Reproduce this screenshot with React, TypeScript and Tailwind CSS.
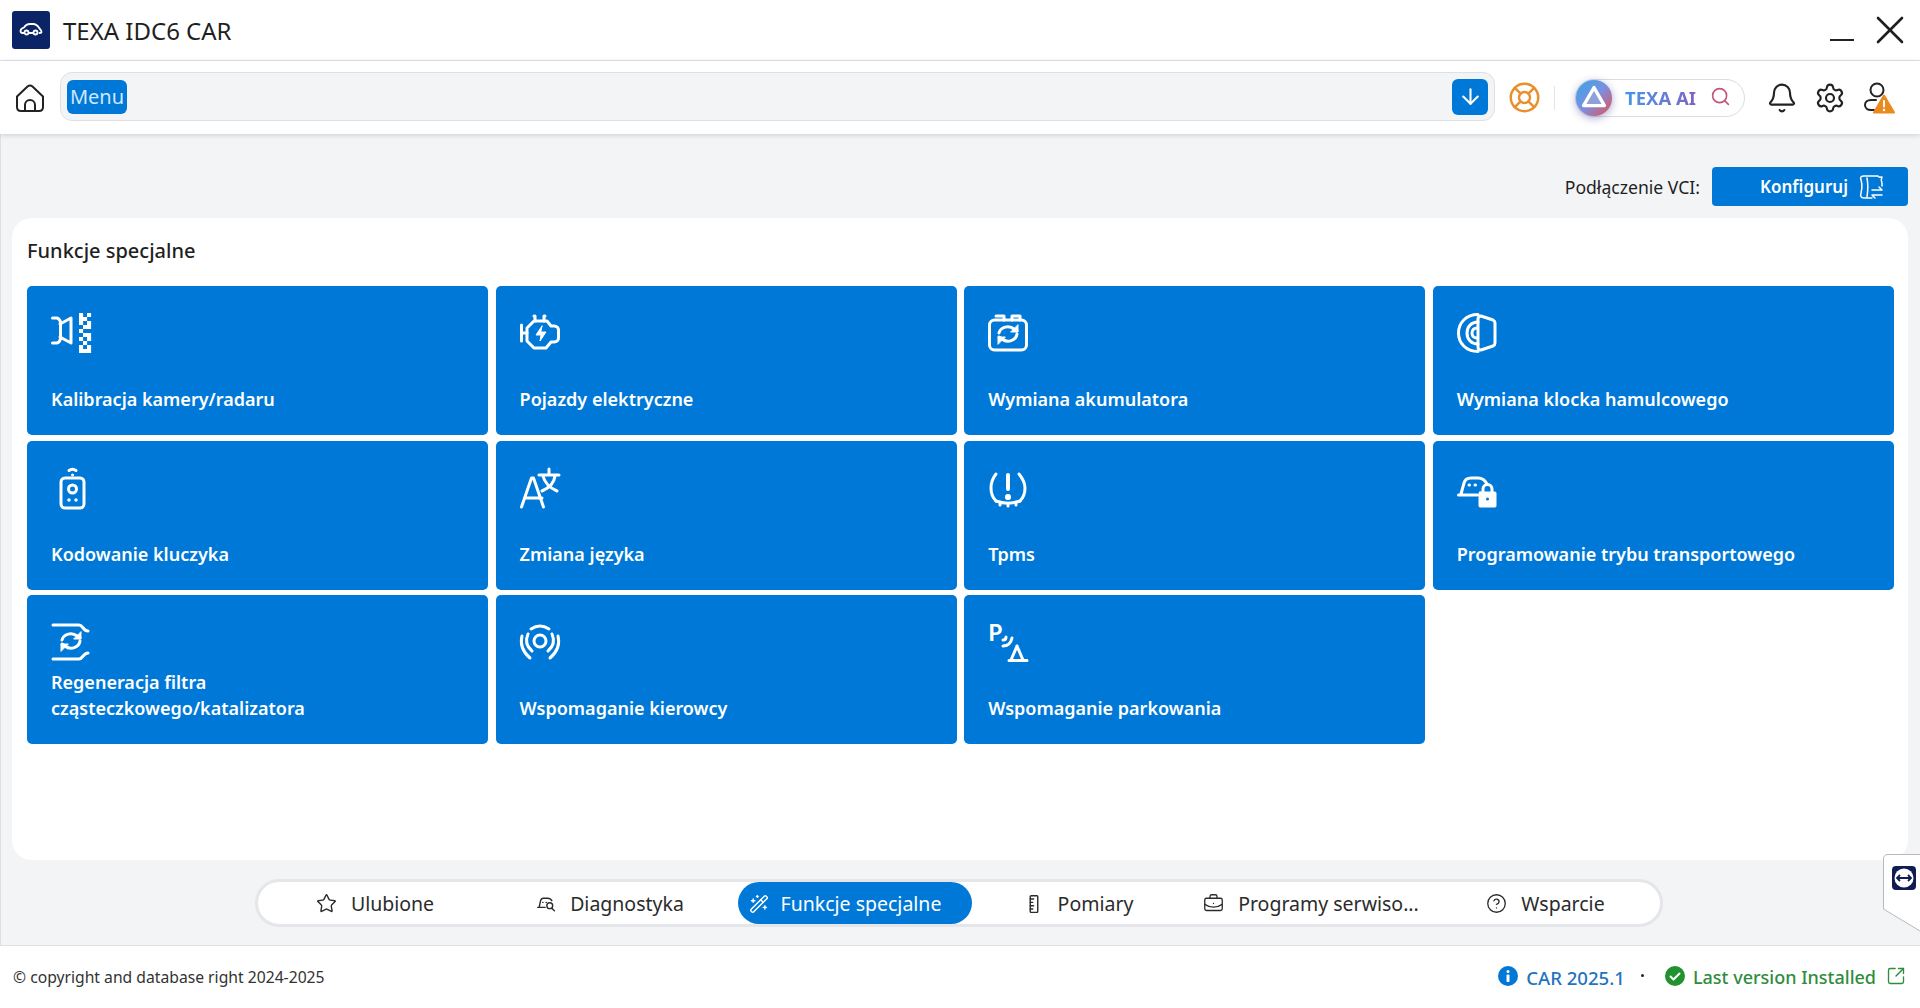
import React from "react";
import {
  ArrowDown,
  Bell,
  BriefcaseBusiness,
  CircleHelp,
  LifeBuoy,
  Search,
  Settings,
  SquareArrowOutUpRight,
  Star,
  WandSparkles,
  X,
} from "lucide-react";

const IconBox: React.FC<{ children: React.ReactNode }> = ({ children }) => (
  <svg
    viewBox="0 0 40 40"
    className="w-10 h-10 text-white overflow-visible"
    fill="none"
    stroke="currentColor"
    strokeWidth={3}
    strokeLinecap="round"
    strokeLinejoin="round"
  >
    {children}
  </svg>
);

const RefreshArrows = () => (
  <>
    <path d="M11 18a9 8 0 0 1 15-4l3 2" />
    <path d="M29 19a9 8 0 0 1-15 5l-3-2" />
    <path d="M30 10v7h-7z" fill="currentColor" strokeWidth={1} />
    <path d="M10 29v-7h7z" fill="currentColor" strokeWidth={1} />
  </>
);

const checkers = [
  [1, 0], [3, 0], [1, 1], [2, 1], [1, 2], [3, 2], [2, 3], [3, 3], [1, 4], [2, 5], [3, 5],
  [1, 6], [3, 6], [2, 7], [1, 8], [3, 8], [1, 9], [2, 9], [3, 9],
];

const CameraIcon = () => (
  <IconBox>
    <path d="M1.500 5h4c2 0 3 1 4 4v17c-1 3-2 4-4 4h-4" />
    <path d="M9 11l11-6v25l-11-6" />
    <g fill="currentColor" stroke="none">
      {checkers.map(([cx, cy]) => (
        <rect key={`${cx}-${cy}`} x={24 + cx * 4} y={cy * 4} width={4.100} height={4} />
      ))}
    </g>
  </IconBox>
);

const EngineIcon = () => (
  <IconBox>
    <path d="M1.500 12v16M1.500 20H7" />
    <path d="M14 3h1v5M25 3h-1v5" />
    <path d="M14 8h13l4 5h3c3 0 4.500 2 4.500 4v8c0 2-1.500 4-4.500 4h-3l-5 6H14l-7-7V15z" />
    <path d="M22 13l-6 9h5l-1 6 6-9h-5z" fill="currentColor" strokeWidth={1} />
  </IconBox>
);

const BatteryIcon = () => (
  <IconBox>
    <rect x="1.500" y="7" width="37" height="30" rx="5" />
    <path d="M8 3h8v4M24 7V3h8v4" />
    <g transform="translate(0 2)">
      <RefreshArrows />
    </g>
  </IconBox>
);

const BrakeIcon = () => (
  <IconBox>
    <path d="M21 1.500C9 1.500 1.500 10 1.500 20S9 38.500 21 38.500" />
    <path d="M21 9c-7 0-11 5-11 11s4 11 11 11" />
    <path d="M20 15c-3 0-5 2-5 5s2 5 5 5" />
    <path d="M24 3l12 4c1 .5 2 1 2 3v20c0 2-1 2.500-2 3l-12 4c-2 0-3-1-3-3V6c0-2 1-3 3-3z" />
  </IconBox>
);

const KeyIcon = () => (
  <IconBox>
    <rect x="10" y="10" width="23" height="30" rx="4" />
    <circle cx="21.500" cy="21" r="4" />
    <path d="M18 2.500c2-1.500 5-1.500 7 0" />
    <circle cx="21.500" cy="7" r="1" fill="currentColor" strokeWidth={1} />
    <circle cx="18" cy="32" r="1" fill="currentColor" strokeWidth={1.500} />
    <circle cx="25" cy="32" r="1" fill="currentColor" strokeWidth={1.500} />
  </IconBox>
);

const LanguageIcon = () => (
  <IconBox>
    <path d="M1.500 39l10-29h2l10 29M5 30h17" />
    <path d="M19 7h20M29 1v6M23 8c2 8 7 12 14 15M35 8c-1 8-6 12-13 15" />
  </IconBox>
);

const TpmsIcon = () => (
  <IconBox>
    <path d="M8 6C4 11 3 15 3 20s2 10 5 13" />
    <path d="M31 6c4 5 6 9 6 14s-2 10-5 13" />
    <path d="M8 33c8 3 16 3 24 0M12 34v3M20 35v3M28 34v3" />
    <path d="M20 7v14" strokeWidth={4} />
    <circle cx="20" cy="29" r="1.600" fill="currentColor" />
  </IconBox>
);

const TransportIcon = () => (
  <IconBox>
    <path d="M1.500 27h19M4 26l3-11c1-4 3-5 7-5h7c4 0 7 2 9 6" />
    <path d="M12 17h.5M18 17h.5" strokeWidth={3} />
    <rect x="22" y="24" width="17" height="15" rx="1" fill="currentColor" strokeWidth={1} />
    <path d="M26 24v-3a4.500 4.500 0 0 1 9 0v3" />
    <circle cx="30.500" cy="31" r="1.500" fill="#0078d7" stroke="none" />
  </IconBox>
);

const FilterIcon = () => (
  <IconBox>
    <path d="M2 3h26c4 0 4 6 9 6" />
    <path d="M2 37h26c4 0 4-6 9-6" />
    <RefreshArrows />
  </IconBox>
);

const AssistIcon = () => (
  <IconBox>
    <circle cx="20" cy="19" r="6" />
    <path d="M11 7c6-4 12-4 18 0" />
    <path d="M8 12c-3 7-2 12 4 17" />
    <path d="M32 12c3 7 2 12-4 17" />
    <path d="M2 14c-2 8 1 16 8 22" />
    <path d="M38 14c2 8-1 16-8 22" />
  </IconBox>
);

const ParkingIcon = () => (
  <IconBox>
    <text x="0" y="19" fontSize="24" fontWeight="600" fill="currentColor" stroke="none" fontFamily="Noto Sans, sans-serif">
      P
    </text>
    <path d="M15 18c2 0 3-1 3-3M15 24c5 0 8-3 9-8" />
    <path d="M29 24l-6 14M29 24l6 14M21 38.500h18" />
  </IconBox>
);

const cards = [
  { label: "Kalibracja kamery/radaru", icon: <CameraIcon /> },
  { label: "Pojazdy elektryczne", icon: <EngineIcon /> },
  { label: "Wymiana akumulatora", icon: <BatteryIcon /> },
  { label: "Wymiana klocka hamulcowego", icon: <BrakeIcon /> },
  { label: "Kodowanie kluczyka", icon: <KeyIcon /> },
  { label: "Zmiana języka", icon: <LanguageIcon /> },
  { label: "Tpms", icon: <TpmsIcon /> },
  { label: "Programowanie trybu transportowego", icon: <TransportIcon /> },
  { label: "Regeneracja filtra cząsteczkowego/katalizatora", icon: <FilterIcon /> },
  { label: "Wspomaganie kierowcy", icon: <AssistIcon /> },
  { label: "Wspomaganie parkowania", icon: <ParkingIcon /> },
];

const DiagIcon = () => (
  <svg viewBox="0 0 24 24" className="w-5 h-5" fill="none" stroke="currentColor" strokeWidth={1.7} strokeLinecap="round" strokeLinejoin="round">
    <path d="M2 16h9M4 15l1.500-7c.5-2 1.500-3 3.500-3h5c2 0 4 1 5 3" />
    <path d="M8 10h.5M12 10h.5" />
    <circle cx="16.500" cy="14" r="3.500" />
    <path d="M19 17l3 3" />
  </svg>
);

const RulerIcon = () => (
  <svg viewBox="0 0 24 24" className="w-5 h-5" fill="none" stroke="currentColor" strokeWidth={1.7} strokeLinecap="round" strokeLinejoin="round">
    <rect x="7.500" y="2" width="9" height="20" rx="1" />
    <path d="M7.500 6h4M7.500 10h3M7.500 14h4M7.500 18h3" />
  </svg>
);

const tabs = [
  { label: "Ulubione", icon: <Star size={21} strokeWidth={1.6} />, width: "w-[234px]" },
  { label: "Diagnostyka", icon: <DiagIcon />, width: "w-[246px] pr-[10px]" },
  { label: "Funkcje specjalne", icon: <WandSparkles size={20} strokeWidth={1.7} />, width: "w-[234px] pr-[20px]", active: true },
  { label: "Pomiary", icon: <RulerIcon />, width: "w-[213px]" },
  { label: "Programy serwiso...", icon: <BriefcaseBusiness size={21} strokeWidth={1.5} />, width: "w-[252px]" },
  { label: "Wsparcie", icon: <CircleHelp size={21} strokeWidth={1.5} />, width: "w-[223px] pr-[6px]" },
];

export default function App() {
  return (
    <div className="h-screen flex flex-col bg-white overflow-hidden relative font-['Noto_Sans',sans-serif] text-[#1f1f1f]">
      <header className="h-[61px] shrink-0 flex items-center border-b border-[#e3e4e6] pl-3 pr-[18px]">
        <div className="w-[38px] h-[38px] rounded-[3px] bg-[#0a2465] flex items-center justify-center">
          <svg viewBox="0 0 24 24" className="w-[24px] h-[24px]" fill="none" stroke="white" strokeWidth={1.8} strokeLinecap="round" strokeLinejoin="round">
            <path d="M5 15H3.500C2 15 1.500 14 1.500 13c0-2 2-3 3.500-3.500C6.500 7 8 6 11 6h3c3 0 5 2 6.500 4.500 1 1 2 2 2 3.500 0 1-1 1-2 1" />
            <circle cx="7.500" cy="14.500" r="2" />
            <circle cx="16.500" cy="14.500" r="2" />
            <path d="M10 15h4" />
          </svg>
        </div>
        <h1 className="ml-[13px] text-[24px] leading-none mt-[2px]">TEXA IDC6 CAR</h1>
        <div className="ml-auto flex items-center gap-[24px]">
          <div className="w-6 h-[2.500px] bg-[#222] mt-[20px]" />
          <X size={48} strokeWidth={1.3} className="-m-3" />
        </div>
      </header>

      <nav className="h-[73px] shrink-0 flex items-center pl-[14px] pr-[22px] shadow-[0_1px_5px_rgba(0,0,0,0.16)] z-10">
        <svg viewBox="0 0 32 32" className="w-8 h-8" fill="none" stroke="#222" strokeWidth={2} strokeLinecap="round" strokeLinejoin="round">
          <path d="M3 14.500L13.500 4.500c1.500-1.300 3.500-1.300 5 0L29 14.500V25c0 2.500-1.500 4-4 4H7c-2.500 0-4-1.500-4-4z" />
          <path d="M11 29v-6a5 5 0 0 1 10 0v6" />
        </svg>
        <div className="ml-[14px] w-[1435px] h-[49px] -mt-[2px] bg-[#f3f4f6] border border-[#dfe0e3] rounded-xl flex items-center justify-between pl-[6px] pr-[6px]">
          <span className="bg-[#0078d7] text-[#cfe8ff] text-[20px] rounded-md px-[3px] h-[34px] w-[60px] flex items-center justify-center">
            Menu
          </span>
          <span className="w-9 h-9 rounded-md bg-[#0078d7] flex items-center justify-center text-white">
            <ArrowDown size={25} strokeWidth={2} />
          </span>
        </div>
        <LifeBuoy size={33} strokeWidth={1.8} className="ml-[13px] text-[#e98f2c]" />
        <div className="w-px h-6 bg-[#e3e4e6] ml-[13px]" />
        <div className="ml-[20px] w-[170px] h-[38px] rounded-full border border-[#dcdde0] flex items-center relative pl-[49px]">
          <svg viewBox="0 0 40 40" className="absolute -left-[1px] -top-[1px] w-[38px] h-[38px] drop-shadow-[0_2px_4px_rgba(60,60,160,0.45)]" fill="none">
            <defs>
              <linearGradient id="aiRing" x1="0" y1="0" x2="1" y2="1">
                <stop offset="0" stopColor="#34a7e8" />
                <stop offset="0.5" stopColor="#7b8fe0" />
                <stop offset="1" stopColor="#e8504f" />
              </linearGradient>
            </defs>
            <circle cx="20" cy="20" r="19" fill="url(#aiRing)" />
            <path d="M20 9L31 28H9z" fill="#8ea0d8" stroke="white" strokeWidth={3.500} strokeLinejoin="round" />
          </svg>
          <span className="text-[18.500px] font-bold bg-linear-to-r from-[#3d97e8] to-[#7a63c4] bg-clip-text text-transparent">
            TEXA AI
          </span>
          <Search size={21} strokeWidth={1.8} className="ml-[14px] -mt-[2px] text-[#c4527d]" />
        </div>
        <Bell size={32} strokeWidth={1.6} className="ml-[21px] text-[#222]" />
        <Settings size={32} strokeWidth={1.6} className="ml-[16px] text-[#222]" />
        <div className="ml-[16px] w-8 h-8 relative">
          <svg viewBox="0 0 32 32" className="w-8 h-8" fill="none" stroke="#222" strokeWidth={2} strokeLinecap="round">
            <circle cx="15" cy="8" r="6.500" />
            <path d="M14 18H9c-3.500 0-6 2-6 5s2.500 5 6 5h3" />
          </svg>
          <svg viewBox="0 0 22 20" className="absolute left-[11px] top-[12px] w-[22px] h-[20px]">
            <path d="M11 1.500L21 18.500H1z" fill="#e98a1f" stroke="#e98a1f" strokeWidth={2} strokeLinejoin="round" />
            <path d="M11 7v5.500" stroke="white" strokeWidth={2} strokeLinecap="round" />
            <circle cx="11" cy="16" r="1.200" fill="white" />
          </svg>
        </div>
      </nav>

      <main className="flex-1 min-h-0 bg-[#f3f4f6] border-l border-[#dfe0e3] pl-[11px] pr-3 flex flex-col">
        <div className="h-[84px] shrink-0 flex items-end justify-end pb-[12px]">
          <span className="text-[17.600px] mr-3 mb-[6px]">Podłączenie VCI:</span>
          <button className="w-[196px] h-[39px] rounded bg-[#0078d7] text-white text-[17px] font-semibold flex items-center justify-end pr-[24px]">
            Konfiguruj
            <svg viewBox="0 0 26 26" className="w-[26px] h-[26px] ml-[10px]" fill="none" stroke="white" strokeWidth={1.500} strokeLinecap="round" strokeLinejoin="round">
              <path d="M6 2h14c1 2 3 1 4 1-1 2-1 4 0 6v3M6 2C3 2 2 3 3 6c1 3 1 9 0 13-1 3 0 5 3 5h8" />
              <path d="M9 4c1 5 1 12 0 19" />
              <path d="M14 16h10l-3-3M24 21H14l3 3" />
            </svg>
          </button>
        </div>

        <section className="h-[642px] shrink-0 bg-white rounded-[20px] pl-[15px] pr-[14px] pt-[16px]">
          <h2 className="text-[20px] font-medium leading-[34px] mb-[18px]">Funkcje specjalne</h2>
          <div className="grid grid-cols-[repeat(4,461px)] gap-x-[7.600px] gap-y-[5.500px]">
            {cards.map((card) => (
              <div
                key={card.label}
                className="h-[149px] rounded-[5px] bg-[#0078d7] px-6 pt-[27px] pb-[23px] flex flex-col justify-between text-white"
              >
                {card.icon}
                <span className="text-[18px] font-semibold leading-[26px]">{card.label}</span>
              </div>
            ))}
          </div>
        </section>

        <div className="mt-[19px] ml-[243px] w-[1408px] h-[48px] rounded-full border-[3px] border-[#e5e6e9] bg-white flex items-center">
          {tabs.map((tab) => (
            <div
              key={tab.label}
              className={
                tab.active
                  ? `${tab.width} h-[42px] pt-[1px] rounded-full bg-[#0078d7] text-white flex items-center justify-center gap-[12px] text-[19.500px]`
                  : `${tab.width} h-[42px] pt-[1px] flex items-center justify-center gap-[14px] text-[19.500px] text-[#2b2b2b]`
              }
            >
              {tab.icon}
              <span className="whitespace-nowrap">{tab.label}</span>
            </div>
          ))}
        </div>
      </main>

      <footer className="h-[63px] shrink-0 border-t border-[#dfe0e3] flex items-center pl-[13px] pr-[14px] pt-[2px] -mt-px">
        <span className="text-[15.700px] text-[#333]">© copyright and database right 2024-2025</span>
        <div className="ml-auto flex items-center text-[18px] font-medium">
          <svg viewBox="0 0 20 20" className="w-5 h-5 -mt-1">
            <circle cx="10" cy="10" r="10" fill="#0078d7" />
            <circle cx="10" cy="5.500" r="1.500" fill="white" />
            <rect x="8.500" y="8.500" width="3" height="7.500" rx="1" fill="white" />
          </svg>
          <span className="ml-2 text-[18.600px] text-[#1f74bd]">CAR 2025.1</span>
          <span className="ml-4 w-[3px] h-[3px] rounded-full bg-[#222] -mt-1" />
          <svg viewBox="0 0 20 20" className="ml-[21px] w-5 h-5 -mt-1" fill="none">
            <circle cx="10" cy="10" r="10" fill="#229230" />
            <path d="M5.500 10.500l3 3 6-6" stroke="white" strokeWidth={2} strokeLinecap="round" strokeLinejoin="round" />
          </svg>
          <span className="ml-2 text-[#2f8c3c]">Last version Installed</span>
          <SquareArrowOutUpRight size={20} strokeWidth={1.6} className="ml-[10px] -mt-1 text-[#2f8c3c]" />
        </div>
      </footer>

      <div className="absolute right-0 top-[854px] w-[37px] h-[78px]">
        <svg viewBox="0 0 37 78" className="w-[37px] h-[78px]">
          <path d="M37 .5H5Q.5 .5 .5 5V55L37 77" fill="white" stroke="#b9b9bd" strokeWidth={1} />
          <rect x="9" y="12" width="24" height="24" rx="4" fill="#0f1d52" />
          <circle cx="21" cy="24" r="9.500" fill="white" />
          <path d="M14 24h14M17 21l-3 3 3 3M25 21l3 3-3 3" stroke="#0f1d52" strokeWidth={1.800} fill="none" />
        </svg>
      </div>
    </div>
  );
}
